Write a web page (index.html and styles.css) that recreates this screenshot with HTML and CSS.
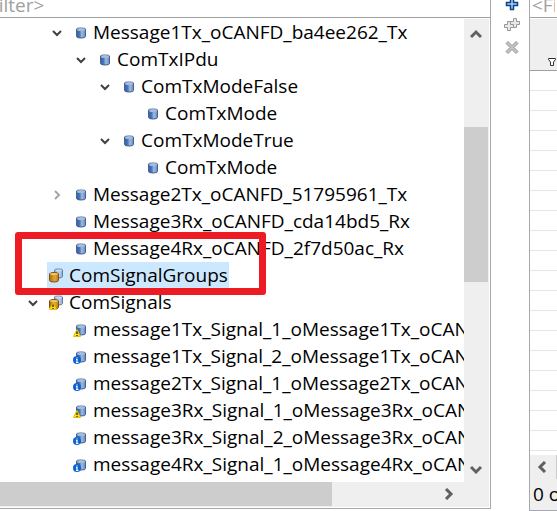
FILE: index.html
```
<!DOCTYPE html>
<html lang="en">
<head>
<meta charset="utf-8">
<title>Com configuration</title>
<link rel="stylesheet" href="styles.css">
</head>
<body>
<svg class="defs" aria-hidden="true">
  <defs>
    <linearGradient id="blue"><stop offset="0" stop-color="#365fa5"/><stop offset=".35" stop-color="#4a76b6"/><stop offset=".6" stop-color="#9dbde2"/><stop offset="1" stop-color="#6188bd"/></linearGradient>
    <linearGradient id="pale"><stop offset="0" stop-color="#7895c0"/><stop offset=".6" stop-color="#bdd3ee"/><stop offset="1" stop-color="#8aa7d0"/></linearGradient>
    <linearGradient id="gold"><stop offset="0" stop-color="#b06e08"/><stop offset=".6" stop-color="#e0a83c"/><stop offset="1" stop-color="#b77c14"/></linearGradient>
    <symbol id="item" viewBox="0 0 16 16">
      <path d="M4.500 4v7.500q0 1.500 4.500 1.500t4.500-1.500V4q0-1-4.500-1t-4.500 1z" fill="url(#blue)" stroke="#4a6090"/>
      <ellipse cx="9" cy="4.500" rx="4" ry="1.500" fill="#a5bddd"/>
    </symbol>
    <symbol id="group" viewBox="0 0 16 16">
      <path d="M6.500 2v6.500q0 1.500 4 1.500t4-1.500V2q0-1-4-1t-4 1z" fill="url(#pale)" stroke="#617aa6"/>
      <ellipse cx="10.500" cy="2.500" rx="3.500" ry="1" fill="#c9dbf2"/>
      <path d="M1.500 6V12.500q0 1.500 4.500 1.500t4.500-1.500V6q0-1.500-4.500-1.500t-4.500 1.500z" fill="url(#gold)" stroke="#81500c"/>
      <ellipse cx="6" cy="6" rx="4" ry="1" fill="#edc675"/>
    </symbol>
    <symbol id="warn" viewBox="0 0 16 16">
      <path d="M5 7.500L1.500 14.500h7z" fill="#ffdf18" stroke="#e3c000" stroke-linejoin="round"/>
      <path d="M5 9.500v2.500M5 13v1" stroke="#4c3b00" stroke-width="1.500"/>
    </symbol>
    <symbol id="info" viewBox="0 0 16 16">
      <circle cx="5" cy="11" r="4" fill="#0d64ce"/>
      <path d="M5 8.500v1M4 10.500h1v3M4 13.500h2.500" fill="none" stroke="#fff" stroke-width="1.200"/>
    </symbol>
    <symbol id="open" viewBox="0 0 12 12"><path d="M2 4l4 4 4-4" fill="none" stroke="#404040" stroke-width="2"/></symbol>
    <symbol id="closed" viewBox="0 0 12 12"><path d="M4 2l4 4-4 4" fill="none" stroke="#a6a6a6" stroke-width="2"/></symbol>
    <symbol id="arrow" viewBox="0 0 12 12"><path d="M1 9l5-5 5 5" fill="none" stroke="#606060" stroke-width="3"/></symbol>
  </defs>
</svg>
<main class="workbench">
  <section class="panel tree-panel">
    <div class="filter"><input class="filter-input shifted" type="text" aria-label="Filter tree" placeholder="&lt;Filter&gt;"></div>
    <div class="viewport">
      <div class="tree-area">
        <ul class="tree" role="tree" aria-label="Com modules">
          <li class="nested">
            <ul>
              <li><div class="row"><button class="twisty" aria-label="Collapse"><svg><use href="#open"/></svg></button><span class="label"><svg><use href="#item"/></svg>Message1Tx_oCANFD_ba4ee262_Tx</span></div>
                <ul>
                  <li><div class="row"><button class="twisty" aria-label="Collapse"><svg><use href="#open"/></svg></button><span class="label"><svg><use href="#item"/></svg>ComTxIPdu</span></div>
                    <ul>
                      <li><div class="row"><button class="twisty" aria-label="Collapse"><svg><use href="#open"/></svg></button><span class="label"><svg><use href="#item"/></svg>ComTxModeFalse</span></div>
                        <ul><li><div class="row leaf"><span class="label"><svg><use href="#item"/></svg>ComTxMode</span></div></li></ul>
                      </li>
                      <li><div class="row"><button class="twisty" aria-label="Collapse"><svg><use href="#open"/></svg></button><span class="label"><svg><use href="#item"/></svg>ComTxModeTrue</span></div>
                        <ul><li><div class="row leaf"><span class="label"><svg><use href="#item"/></svg>ComTxMode</span></div></li></ul>
                      </li>
                    </ul>
                  </li>
                </ul>
              </li>
              <li><div class="row"><button class="twisty" aria-label="Expand"><svg><use href="#closed"/></svg></button><span class="label"><svg><use href="#item"/></svg>Message2Tx_oCANFD_51795961_Tx</span></div></li>
              <li><div class="row leaf"><span class="label"><svg><use href="#item"/></svg>Message3Rx_oCANFD_cda14bd5_Rx</span></div></li>
              <li><div class="row leaf"><span class="label"><svg><use href="#item"/></svg>Message4Rx_oCANFD_2f7d50ac_Rx</span></div></li>
            </ul>
          </li>
          <li class="marked"><div class="row leaf"><span class="label selected"><svg><use href="#group"/></svg>ComSignalGroups</span></div><div class="highlight"></div></li>
          <li><div class="row"><button class="twisty" aria-label="Collapse"><svg><use href="#open"/></svg></button><span class="label"><svg><use href="#group"/><use href="#warn"/></svg>ComSignals</span></div>
            <ul>
              <li><div class="row leaf"><span class="label"><svg><use href="#item"/><use href="#warn"/></svg>message1Tx_Signal_1_oMessage1Tx_oCAN</span></div></li>
              <li><div class="row leaf"><span class="label"><svg><use href="#item"/><use href="#info"/></svg>message1Tx_Signal_2_oMessage1Tx_oCAN</span></div></li>
              <li><div class="row leaf"><span class="label"><svg><use href="#item"/><use href="#info"/></svg>message2Tx_Signal_1_oMessage2Tx_oCAN</span></div></li>
              <li><div class="row leaf"><span class="label"><svg><use href="#item"/><use href="#warn"/></svg>message3Rx_Signal_1_oMessage3Rx_oCAN</span></div></li>
              <li><div class="row leaf"><span class="label"><svg><use href="#item"/><use href="#info"/></svg>message3Rx_Signal_2_oMessage3Rx_oCAN</span></div></li>
              <li><div class="row leaf"><span class="label"><svg><use href="#item"/><use href="#info"/></svg>message4Rx_Signal_1_oMessage4Rx_oCAN</span></div></li>
            </ul>
          </li>
        </ul>
      </div>
      <div class="vscroll">
        <button class="arrow" aria-label="Scroll up"><svg><use href="#arrow"/></svg></button>
        <div class="vtrack"><div class="vthumb"></div></div>
        <button class="arrow down" aria-label="Scroll down"><svg><use href="#arrow"/></svg></button>
      </div>
      <div class="hscroll">
        <div class="hthumb"></div>
        <button class="arrow right" aria-label="Scroll right"><svg><use href="#arrow"/></svg></button>
      </div>
    </div>
  </section>
  <nav class="tools" aria-label="Element actions">
    <button aria-label="Add"><svg viewBox="0 0 16 16"><path d="M6.500 2.500h3v4h4v3h-4v4h-3v-4h-4v-3h4z" fill="#9ed4f5" stroke="#123f8c" stroke-width="1.500"/></svg></button>
    <button aria-label="Add multiple"><svg viewBox="0 0 16 16"><path d="M9.500 .500h3v3h3v3h-3v3h-3v-3h-3v-3h3z" fill="#e8e8e8" stroke="#989898"/><path d="M3.500 3.500h3v3h3v3h-3v3h-3v-3h-3v-3h3z" fill="#e8e8e8" stroke="#989898"/></svg></button>
    <button aria-label="Delete"><svg viewBox="0 0 16 16"><path d="M4 1.500l4 4 4-4L14 3.500l-4 4 4 4-2 2-4-4-4 4-2-2 4-4-4-4z" fill="#c2c2c2" stroke="#969696"/></svg></button>
  </nav>
  <section class="panel table-panel">
    <div class="filter"><input class="filter-input" type="text" aria-label="Filter table" placeholder="&lt;Filter&gt;"></div>
    <div class="head"><svg viewBox="0 0 8 8"><path d="M.500.500h7v1l-2 2.500v3.500h-3V4L.500 1.500z" fill="#fff" stroke="#303030"/></svg></div>
    <div class="grid-lines"></div>
    <div class="table-scroll"><button class="arrow left" aria-label="Scroll left"><svg><use href="#arrow"/></svg></button><div class="thumb"></div></div>
    <div class="status">0 of 0</div>
  </section>
</main>
</body>
</html>
```
FILE: styles.css
```
* { box-sizing: border-box; }
body {
  margin: 0;
  background: #fff;
  color: #000;
  font: 19px/27px "Open Sans", "Noto Sans", sans-serif;
}
svg { display: block; flex: none; }
button { border: 0; padding: 0; background: none; color: inherit; font: inherit; }
ul { list-style: none; margin: 0; padding: 0; }
.defs { position: absolute; width: 0; height: 0; }

.workbench {
  display: grid;
  grid-template-columns: minmax(0, 1fr) 38px 28px;
  height: 100vh;
  overflow: hidden;
}
.panel { display: flex; flex-direction: column; min-width: 0; }
.filter {
  flex: none;
  display: flex;
  align-items: flex-end;
  height: 18px;
  border-bottom: 1px solid #a0a0a0;
  overflow: hidden;
}
.filter-input {
  flex: 1;
  min-width: 0;
  height: 24px;
  border: 0;
  padding: 0 2px;
  background: none;
  font: inherit;
  outline: 0;
}
.filter-input::placeholder { color: #a0a0a0; opacity: 1; }
.shifted { margin-left: -24px; }

.tree-panel {
  margin-bottom: 2px;
  border: solid #a5a8b0;
  border-width: 0 1px 1px 0;
}
.viewport {
  flex: 1;
  min-height: 0;
  display: grid;
  grid-template: minmax(0, 1fr) 25px / minmax(0, 1fr) 25px;
  padding: 1px 1px 1px 0;
}
.tree-area { overflow: hidden; }
.tree { padding-left: 27px; }
.tree ul { padding-left: 24px; }
.row { display: flex; align-items: center; height: 27px; white-space: nowrap; }
.leaf { padding-left: 20px; }
.twisty { width: 20px; flex: none; }
.twisty svg { width: 12px; height: 12px; }
.label {
  display: flex;
  align-items: center;
  gap: 5px;
  height: 27px;
  padding: 0 1px;
}
.label svg { width: 16px; height: 16px; }
.selected { background: #cce8ff; }
.marked { position: relative; }
.highlight {
  position: absolute;
  top: -30px;
  left: -12px;
  width: 251px;
  height: 63px;
  border: 7px solid #ed1c24;
  border-radius: 3px;
}

.arrow { display: grid; place-items: center; flex: none; width: 24px; height: 24px; }
.arrow svg { width: 12px; height: 12px; }
.down svg { transform: rotate(180deg); }
.right svg { transform: rotate(90deg); }
.left svg { transform: rotate(-90deg); }
.vscroll { display: flex; flex-direction: column; background: #efefef; padding-top: 3px; }
.vtrack { flex: 1; padding-top: 81px; }
.vthumb { width: 24px; height: 40%; min-height: 155px; background: #cdcdcd; }
.hscroll {
  grid-column: 1 / -1;
  display: flex;
  justify-content: space-between;
  padding-right: 28px;
  background: #efefef;
}
.hthumb { width: 72%; height: 24px; background: #cdcdcd; }

.tools {
  display: flex;
  flex-direction: column;
  align-items: center;
  gap: 6px;
  margin-top: -4px;
  padding-left: 4px;
}
.tools svg { width: 16px; height: 16px; }

.table-panel { border: solid #a5a8b0; border-width: 0 0 1px 1px; overflow: hidden; }
.head {
  flex: none;
  display: flex;
  align-items: flex-end;
  justify-content: flex-end;
  height: 53px;
  padding: 0 1px 4px 0;
  border-top: 1px solid #fff;
  border-bottom: 1px solid #a0a0a0;
  background: #efefef;
}
.head svg { width: 8px; height: 8px; }
.grid-lines {
  flex: 1;
  background: repeating-linear-gradient(#fff 0 19px, #e5e5e5 19px 20px);
}
.table-scroll { flex: none; display: flex; height: 24px; background: #efefef; }
.table-scroll .thumb { flex: 1; margin-left: 2px; background: #cdcdcd; }
.status { flex: none; height: 31px; padding: 2px 3px; background: #efefef; white-space: nowrap; }
```
